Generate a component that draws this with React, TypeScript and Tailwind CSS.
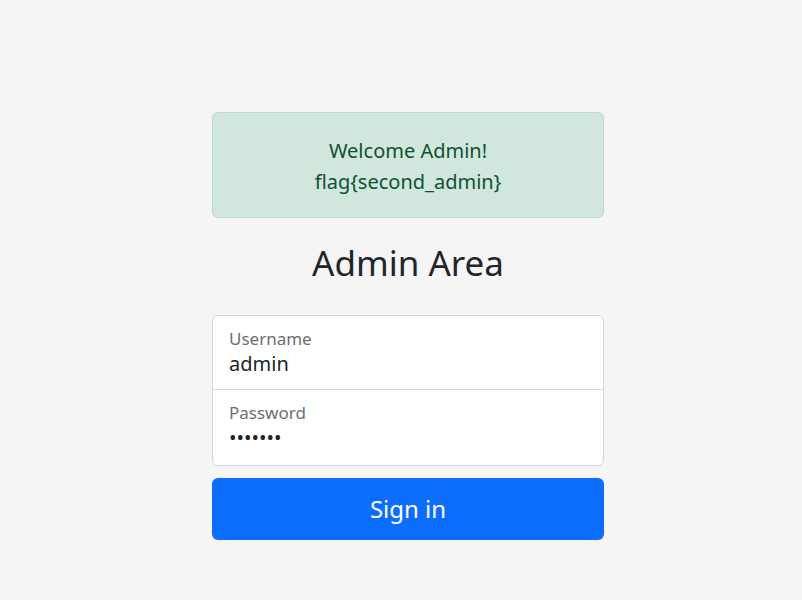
import React, { useState } from 'react';

const App: React.FC = () => {
  const [username, setUsername] = useState('admin');
  const [password, setPassword] = useState('1234567');

  return (
    <div className="min-h-screen bg-[#f5f5f5] text-[#212529] flex justify-center pl-[14px]" style={{ fontFamily: '"Noto Sans", "Open Sans", sans-serif' }}>
      <main className="w-[392px] pt-[112px]">
        {/* Alert */}
        <div className="bg-[#d1e7dd] border border-[#badbcc] text-[#0f5132] rounded-[6px] pt-[22px] pb-[20px] text-center text-[20px] leading-[31px]">
          <div>Welcome Admin!</div>
          <div>flag{'{'}second_admin{'}'}</div>
        </div>

        <h1 className="mt-[23px] mb-[31px] text-center text-[35px] leading-[43px] font-normal text-[#212529]">Admin Area</h1>

        <form onSubmit={e => e.preventDefault()}>
          <div className="bg-white border border-[#d3d6da] rounded-[6px] overflow-hidden">
            <label className="block h-[74px] px-[16px] pt-[11px] border-b border-[#d3d6da]">
              <span className="block text-[17px] leading-[24px] text-[#6c6f72]">Username</span>
              <input
                type="text"
                value={username}
                onChange={e => setUsername(e.target.value)}
                className="block w-full text-[20px] leading-[26px] text-[#212529] bg-transparent outline-none"
              />
            </label>
            <label className="block h-[75px] px-[16px] pt-[11px]">
              <span className="block text-[17px] leading-[24px] text-[#6c6f72]">Password</span>
              <input
                type="password"
                value={password}
                onChange={e => setPassword(e.target.value)}
                className="block w-full text-[20px] leading-[26px] text-[#212529] bg-transparent outline-none"
              />
            </label>
          </div>

          <button
            type="submit"
            className="mt-[12px] w-full h-[62px] bg-[#0d6efd] text-white text-[24px] rounded-[6px]"
          >
            Sign in
          </button>
        </form>
      </main>
    </div>
  );
};

export default App;
